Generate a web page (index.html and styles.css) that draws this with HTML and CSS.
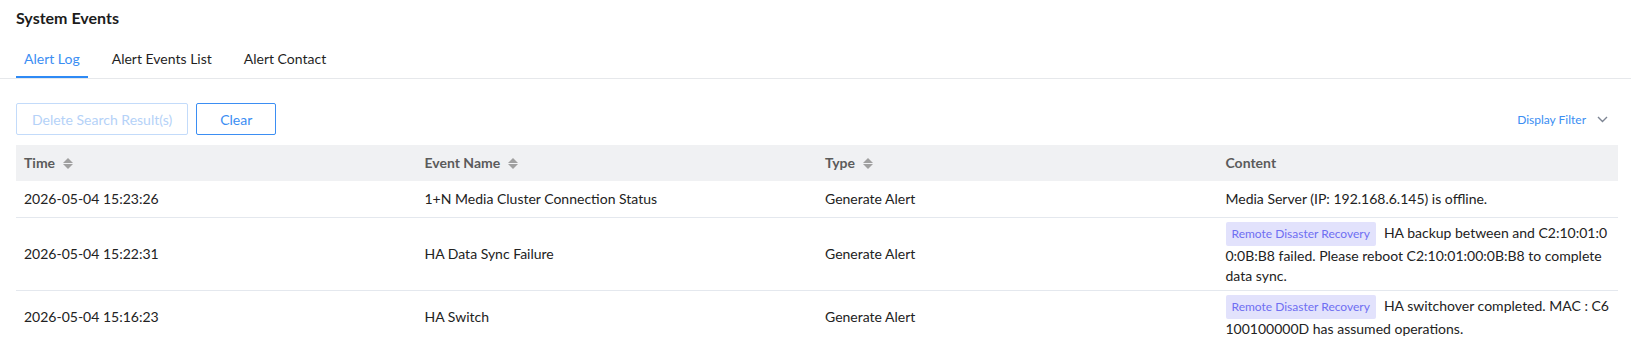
FILE: index.html
```html
<!DOCTYPE html>
<html>
<head>
<meta charset="utf-8">
<link rel="stylesheet" href="styles.css">
</head>
<body>
<div class="page">
  <h1 class="title">System Events</h1>
  <nav class="tabs">
    <div class="tab active">Alert Log</div>
    <div class="tab">Alert Events List</div>
    <div class="tab">Alert Contact</div>
  </nav>
  <section class="content">
    <div class="toolbar">
      <div class="actions">
        <button class="btn disabled">Delete Search Result(s)</button>
        <button class="btn">Clear</button>
      </div>
      <div class="filter">Display Filter
        <svg class="chev" width="11" height="7" viewBox="0 0 11 7"><path d="M1 1l4.5 4.5L10 1" fill="none" stroke="#7d8593" stroke-width="1.4"/></svg>
      </div>
    </div>
    <div class="table">
      <div class="row head">
        <div class="cell">Time <span class="sort"><i class="up"></i><i class="down"></i></span></div>
        <div class="cell">Event Name <span class="sort"><i class="up"></i><i class="down"></i></span></div>
        <div class="cell">Type <span class="sort"><i class="up"></i><i class="down"></i></span></div>
        <div class="cell">Content</div>
      </div>
      <div class="row">
        <div class="cell">2026-05-04 15:23:26</div>
        <div class="cell">1+N Media Cluster Connection Status</div>
        <div class="cell">Generate Alert</div>
        <div class="cell text">Media Server (IP: 192.168.6.145) is offline.</div>
      </div>
      <div class="row">
        <div class="cell">2026-05-04 15:22:31</div>
        <div class="cell">HA Data Sync Failure</div>
        <div class="cell">Generate Alert</div>
        <div class="cell text"><span class="tag">Remote Disaster Recovery</span><span>HA backup between and C2:10:01:00:0B:B8 failed. Please reboot C2:10:01:00:0B:B8 to complete data sync.</span></div>
      </div>
      <div class="row">
        <div class="cell">2026-05-04 15:16:23</div>
        <div class="cell">HA Switch</div>
        <div class="cell">Generate Alert</div>
        <div class="cell text"><span class="tag">Remote Disaster Recovery</span><span>HA switchover completed. MAC : C6100100000D has assumed operations.</span></div>
      </div>
    </div>
  </section>
</div>
</body>
</html>
```
FILE: styles.css
```css
* { box-sizing: border-box; }
html, body { margin: 0; padding: 0; background: #fff; }
body {
  font-family: Lato, "Open Sans", sans-serif;
  font-size: 14px;
  color: #222;
}
.title {
  margin: 0;
  padding: 8px 16px 0;
  height: 40px;
  font-size: 16px;
  line-height: 20px;
  font-weight: 700;
  color: #1c1c1c;
}
.tabs {
  display: flex;
  gap: 16px;
  padding: 0 16px;
  border-bottom: 1px solid #e6e8eb;
}
.tab {
  padding: 0 8px;
  height: 38px;
  line-height: 38px;
  color: #1f1f1f;
  border-bottom: 2px solid transparent;
}
.tab.active {
  color: #3b8ef3;
  border-bottom-color: #2e8af5;
}
.content {
  padding: 24px 13px 0 16px;
}
.toolbar {
  display: flex;
  justify-content: space-between;
  align-items: center;
  margin-bottom: 10px;
}
.actions { display: flex; gap: 8px; }
.btn {
  height: 32px;
  min-width: 80px;
  padding: 0 15px;
  border: 1px solid #3b8ef3;
  border-radius: 2px;
  background: #fff;
  color: #3b8ef3;
  font-family: inherit;
  font-size: 14px;
}
.btn.disabled {
  border-color: #c3dbfa;
  color: #b5d2f8;
}
.filter {
  display: flex;
  align-items: center;
  gap: 11px;
  padding-right: 10px;
  font-size: 12px;
  color: #3b8ef3;
}
.table { width: 100%; }
.row {
  display: grid;
  grid-template-columns: repeat(4, 1fr);
  min-height: 37px;
  border-bottom: 1px solid #e4e8ee;
}
.row.head {
  background: #f0f1f3;
  border-bottom: none;
  min-height: 36px;
  font-weight: 700;
  color: #5b5b5b;
}
.cell {
  display: flex;
  align-items: center;
  padding: 4px 8px;
  line-height: 20px;
}
.cell.text {
  display: block;
  align-self: center;
  word-break: break-all;
}
.sort {
  display: inline-flex;
  flex-direction: column;
  gap: 1px;
  margin-left: 8px;
}
.sort i {
  display: block;
  width: 0; height: 0;
  border-left: 5px solid transparent;
  border-right: 5px solid transparent;
}
.sort .up { border-bottom: 5px solid #a0a0a0; }
.sort .down { border-top: 5px solid #a0a0a0; }
.tag {
  display: inline-block;
  height: 24px;
  line-height: 24px;
  padding: 0 6px;
  margin-right: 8px;
  border-radius: 2px;
  background: #e2e2fc;
  color: #6f6ff2;
  font-size: 12px;
  vertical-align: middle;
}
```
